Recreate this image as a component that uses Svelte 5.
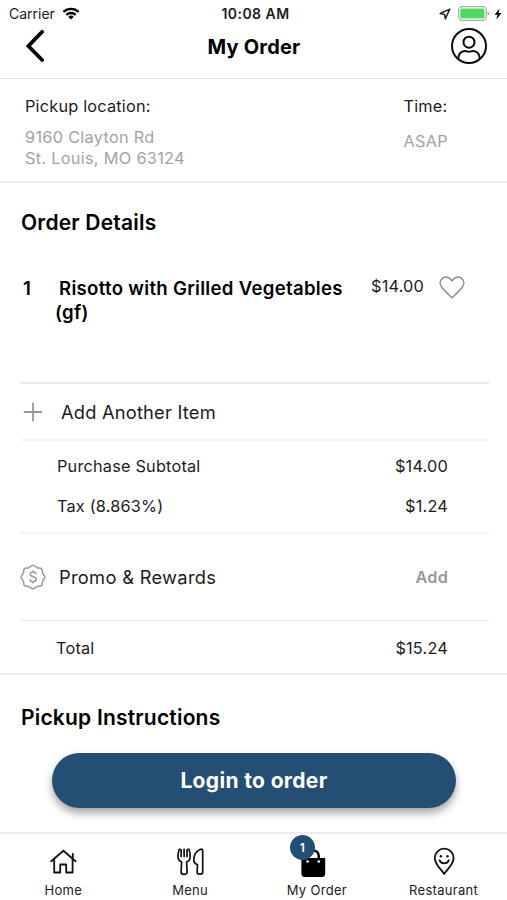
<script lang="ts">
  const item = { qty: 1, name: 'Risotto with Grilled Vegetables (gf)', price: 14 };
  const tax = 1.24;

  const tabs = [
    { id: 'home', label: 'Home' },
    { id: 'menu', label: 'Menu' },
    { id: 'order', label: 'My Order' },
    { id: 'restaurant', label: 'Restaurant' }
  ];

  const money = (n: number) => '$' + n.toFixed(2);
</script>

<div class="screen">
  <div class="status">
    <div class="status-left">
      <span class="carrier">Carrier</span>
      <svg viewBox="0 0 18 13" width="18" height="13" aria-hidden="true">
        <g fill="none" stroke="#000" stroke-width="2.3">
          <path d="M1.4 4.9a11 11 0 0 1 15.2 0" />
          <path d="M4.3 7.9a6.8 6.8 0 0 1 9.4 0" />
        </g>
        <path d="M9 12.6 6.3 9.9a3.9 3.9 0 0 1 5.4 0z" />
      </svg>
    </div>
    <span class="clock">10:08 AM</span>
    <div class="status-right">
      <svg viewBox="0 0 12 12" width="12" height="12" aria-hidden="true">
        <path d="M10.8 1.1 1.2 5.5l4.4 1 .8 4.3z" fill="none" stroke="#222" stroke-width="1.5" stroke-linejoin="round" />
      </svg>
      <svg class="battery" viewBox="0 0 32 15" width="32" height="15" aria-hidden="true">
        <rect x=".7" y=".7" width="27.6" height="13.6" rx="3.6" fill="#fff" stroke="#aaa" stroke-width="1.2" />
        <rect x="2.3" y="2.5" width="24.2" height="10" rx="1.6" fill="#4cd964" />
        <path d="M29.6 5.2q1.6.6 1.6 2.3t-1.6 2.3z" fill="#aaa" />
      </svg>
      <svg viewBox="0 0 8 12" width="8" height="12" aria-hidden="true">
        <path d="M5.6.4.5 6.7h3L2.4 11.6 7.5 5.1h-3z" />
      </svg>
    </div>
  </div>

  <header>
    <button class="icon-btn back" aria-label="Back">
      <svg viewBox="0 0 20 34" width="20" height="34">
        <path d="M17.2 2.8 3.4 17l13.8 14" fill="none" stroke="#000" stroke-width="3.8" stroke-linecap="round" />
      </svg>
    </button>
    <h1>My Order</h1>
    <button class="icon-btn" aria-label="Account">
      <svg viewBox="0 0 38 38" width="38" height="38" fill="none" stroke="#0a0a0a" stroke-width="2">
        <circle cx="19" cy="19" r="17" />
        <circle cx="19" cy="15.2" r="5.5" />
        <path d="M8.2 32c0-4.800 2.800-8.100 6.500-8.100 1.900 0 2.600.9 4.300.9s2.400-.9 4.300-.9c3.700 0 6.500 3.300 6.500 8.100" />
      </svg>
    </button>
  </header>

  <section class="pickup">
    <div>
      <p class="label">Pickup location:</p>
      <p class="muted">9160 Clayton Rd<br />St. Louis, MO 63124</p>
    </div>
    <div>
      <p class="label">Time:</p>
      <p class="muted asap">ASAP</p>
    </div>
  </section>

  <section class="details">
    <h2>Order Details</h2>

    <div class="item">
      <span class="qty">{item.qty}</span>
      <span class="name">{item.name}</span>
      <span class="price">{money(item.price)}</span>
      <svg class="heart" viewBox="0 0 26 23" width="26" height="23" aria-hidden="true">
        <path
          d="M13 21.800C9.500 18.300 4.800 14 2.700 11.200.300 7.900.9 4.300 3.500 2.300c3-2.300 7.300-1.300 9.500 2.600 2.200-3.900 6.500-4.900 9.500-2.600 2.600 2 3.200 5.600.8 8.900-2.100 2.800-6.800 7.100-10.300 10.600z"
          fill="none"
          stroke="#8e8e8e"
          stroke-width="1.5"
          stroke-linejoin="round"
        />
      </svg>
    </div>

    <button class="row add-item">
      <svg viewBox="0 0 20 20" width="20" height="20" aria-hidden="true">
        <path d="M10 .8v18.400M.8 10h18.400" stroke="#999" stroke-width="1.8" />
      </svg>
      <span>Add Another Item</span>
    </button>

    <dl class="row costs">
      <div><dt>Purchase Subtotal</dt><dd>{money(item.price)}</dd></div>
      <div><dt>Tax (8.863%)</dt><dd>{money(tax)}</dd></div>
    </dl>

    <div class="row promo">
      <svg viewBox="0 0 26 26" width="26" height="26" fill="none" stroke="#9a9a9a" stroke-width="1.5" aria-hidden="true">
        <path
          d="M13 1.200c2 0 2.600 1.900 4.200 2.500s3.200-.2 4.400 1 .400 2.800 1 4.400 2.300 2.200 2.300 4-1.700 2.400-2.300 4 .2 3.200-1 4.400-2.800.4-4.400 1-2.200 2.300-4.200 2.300-2.600-1.700-4.200-2.300-3.200.2-4.400-1-.4-2.800-1-4.400-2.300-2.200-2.300-4 1.700-2.400 2.300-4-.2-3.200 1-4.400 2.800-.4 4.400-1S11 1.200 13 1.200z"
        />
        <path d="M16 10.100c-.2-1.300-1.300-2-2.900-2-1.700 0-2.900.8-2.900 2.200 0 3.300 6 1.600 6 5 0 1.500-1.300 2.400-3.100 2.400s-3-.8-3.200-2.300M13 6.400v1.700M13 17.700v1.700" />
      </svg>
      <span class="promo-title">Promo &amp; Rewards</span>
      <span class="add">Add</span>
    </div>

    <div class="row total">
      <span>Total</span>
      <span>{money(item.price + tax)}</span>
    </div>
  </section>

  <section class="instructions">
    <h2>Pickup Instructions</h2>
    <button class="login">Login to order</button>
  </section>

  <nav>
    {#each tabs as tab (tab.id)}
      <a href="#{tab.id}">
        <span class="tab-icon">
          {#if tab.id === 'home'}
            <svg viewBox="0 0 28 28" width="28" height="28" fill="none" stroke="#111" stroke-width="1.8" stroke-linejoin="round" stroke-linecap="round">
              <path d="M2.200 13.200 14.400 2.700l12.200 10.500" />
              <path d="M5.200 11v13.500h6v-8h6v8h6.400V11M23.800 10V5.800" />
            </svg>
          {:else if tab.id === 'menu'}
            <svg viewBox="0 0 28 28" width="28" height="28" fill="none" stroke="#111" stroke-width="1.700" stroke-linejoin="round" stroke-linecap="round">
              <path d="M3.300 1.300C2.400 3.500 2 6.500 2 8.700c0 2.700 1.500 4.400 3.600 5.300L5.100 24.300c0 2.700 6 2.700 6 0L10.600 14c2.100-.9 3.600-2.600 3.600-5.300 0-2.200-.4-5.200-1.300-7.400-1.600-.3-2 .4-1.900 1.400l.1 5.700M3.300 1.300c1.600-.3 2 .4 1.900 1.400l-.1 5.700M8.100 1.300v7.100" />
              <path d="M26.700 2.500v22c0 2.200-5.600 2.200-5.600 0l.4-7.800c-2.500-.9-3.900-2.500-3.700-5.200.3-4.800 2.600-8.500 6.300-10 1.700-.6 2.600-.3 2.600 1z" />
            </svg>
          {:else if tab.id === 'order'}
            <svg viewBox="0 0 28 28" width="28" height="28">
              <path d="M4.600 13V8.300c0-7.800 11.200-7.800 11.200 0V13" fill="none" stroke="#000" stroke-width="2.500" />
              <path d="M-1.600 10h23.800v15.400q0 3.500-3.500 3.500H1.900q-3.500 0-3.500-3.500z" />
              <circle cx="4.600" cy="13.500" r="1.300" fill="#fff" />
              <circle cx="15.800" cy="13.500" r="1.300" fill="#fff" />
            </svg>
            <span class="badge">{item.qty}</span>
          {:else}
            <svg viewBox="0 0 28 28" width="28" height="28" fill="none" stroke="#111" stroke-width="1.800" stroke-linejoin="round">
              <path d="M14.200 26C11.300 21.500 4.800 16.500 4.800 10a9.400 9.400 0 0 1 18.800 0c0 6.500-6.500 11.500-9.400 16z" />
              <path d="M9.600 12.300c1.700 4 7.500 4 9.200 0" stroke-linecap="round" />
              <circle cx="10.900" cy="8.300" r="1.200" fill="#111" stroke="none" />
              <circle cx="17.500" cy="8.300" r="1.200" fill="#111" stroke="none" />
            </svg>
          {/if}
        </span>
        <span class="tab-label">{tab.label}</span>
      </a>
    {/each}
  </nav>
</div>

<style>
  :global(body) {
    background: #fff;
  }

  .screen {
    display: flex;
    flex-direction: column;
    width: 507px;
    height: 900px;
    overflow: hidden;
    font-family: Inter, 'Liberation Sans', sans-serif;
    font-size: 16.3px;
    letter-spacing: 0.2px;
    color: #1c1c1c;
    background: #fff;
  }

  .screen * {
    box-sizing: border-box;
  }

  h1,
  h2,
  p,
  dl,
  dd {
    margin: 0;
  }

  button {
    padding: 0;
    border: 0;
    background: none;
    font: inherit;
    letter-spacing: inherit;
    color: inherit;
  }

  svg {
    display: block;
    flex: none;
  }

  /* status bar */
  .status {
    display: grid;
    grid-template-columns: 1fr auto 1fr;
    align-items: center;
    height: 27px;
    padding: 0 5px 0 9px;
    font-size: 14px;
    letter-spacing: 0;
  }

  .status-left,
  .status-right {
    display: flex;
    align-items: center;
  }

  .status-left {
    gap: 7px;
  }

  .status-right {
    justify-content: flex-end;
  }

  .battery {
    margin: 0 4px 0 7px;
  }

  .clock {
    font-weight: 600;
    letter-spacing: 0.45px;
  }

  header {
    display: flex;
    align-items: center;
    justify-content: space-between;
    height: 52px;
    padding: 0 19px 13px 25px;
    border-bottom: 1px solid #e2e2e2;
  }

  .icon-btn {
    width: 38px;
  }

  .back {
    width: 33px;
  }

  h1 {
    padding-top: 1px;
    font-size: 20px;
    font-weight: 700;
    color: #000;
  }

  .pickup {
    display: flex;
    justify-content: space-between;
    height: 104px;
    padding: 16px 59px 0 25px;
    border-bottom: 2px solid #efefef;
  }

  .label {
    line-height: 22px;
  }

  .muted {
    margin-top: 10px;
    line-height: 21px;
    letter-spacing: 0.3px;
    color: #a3a3a3;
  }

  .asap {
    margin-top: 14px;
  }

  h2 {
    padding-left: 1px;
    font-size: 21px;
    font-weight: 600;
    line-height: 26px;
    color: #000;
  }

  .details {
    height: 492px;
    padding: 27px 18px 0 20px;
    border-bottom: 2px solid #efefef;
  }

  .item {
    display: flex;
    height: 107px;
    padding-top: 1px;
    margin-top: 39px;
  }

  .qty,
  .name {
    font-size: 18.6px;
    font-weight: 600;
    line-height: 24px;
    letter-spacing: 0.3px;
    color: #000;
  }

  .qty {
    width: 35px;
    padding-left: 3px;
  }

  .name {
    width: 312px;
    text-indent: 4px;
  }

  .price {
    margin-left: 4px;
    width: 68px;
    line-height: 20px;
  }

  .row {
    width: 100%;
    border-top: 2px solid #efefef;
  }

  .add-item {
    display: flex;
    align-items: center;
    gap: 18px;
    height: 57px;
    padding-left: 3px;
    border-top: 2px solid #eaeaea;
    font-size: 18.3px;
  }

  .costs {
    height: 93px;
    padding-top: 5px;
    border-top-color: #f5f5f5;
  }

  .costs div {
    display: flex;
    justify-content: space-between;
    padding: 0 41px 0 37px;
    line-height: 40px;
  }

  .promo {
    display: flex;
    align-items: center;
    height: 88px;
    padding-right: 41px;
    border-top-color: #f4f4f4;
  }

  .promo-title {
    margin-left: 13px;
    font-size: 18.3px;
    letter-spacing: 0.3px;
  }

  .add {
    margin-left: auto;
    font-weight: 600;
    color: #999;
  }

  .total {
    display: flex;
    justify-content: space-between;
    padding: 0 41px 0 36px;
    border-top: 1px solid #e8e8e8;
    line-height: 54px;
  }

  .instructions {
    display: flex;
    flex-direction: column;
    flex: 1;
    padding: 30px 20px 0;
  }

  .login {
    width: 404px;
    height: 55px;
    margin: 22px 0 0 32px;
    border-radius: 28px;
    background: #244e73;
    box-shadow: 0 5px 8px rgb(0 0 0 / 0.36);
    font-size: 21px;
    font-weight: 700;
    letter-spacing: 0.35px;
    color: #fff;
  }

  nav {
    display: grid;
    grid-template-columns: repeat(4, 1fr);
    height: 68px;
    border-top: 2px solid #ececec;
  }

  nav a {
    display: flex;
    flex-direction: column;
    align-items: center;
    padding-top: 14px;
    color: #1c1c1c;
    text-decoration: none;
  }

  .tab-icon {
    position: relative;
  }

  .tab-icon svg {
    overflow: visible;
  }

  .badge {
    position: absolute;
    top: -13px;
    left: -13px;
    width: 25px;
    height: 25px;
    border-radius: 50%;
    background: #244e73;
    font-size: 12px;
    font-weight: 600;
    line-height: 25px;
    text-align: center;
    color: #fff;
  }

  .tab-label {
    margin-top: 5px;
    font-size: 13px;
    line-height: 18px;
    letter-spacing: 0.3px;
  }
</style>
